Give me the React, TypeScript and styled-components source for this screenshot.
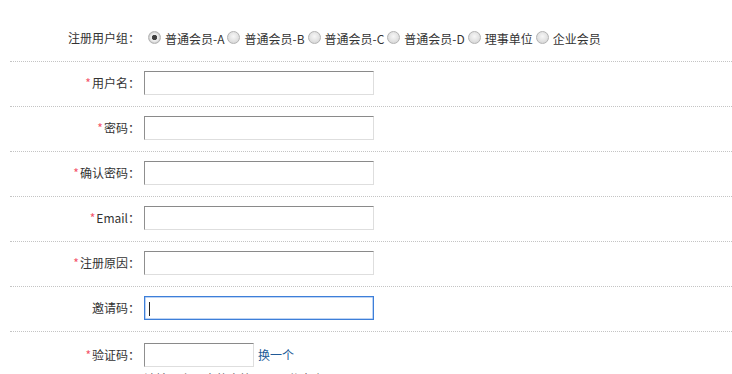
import React from "react";
import styled, { createGlobalStyle, css } from "styled-components";

const Global = createGlobalStyle`
  html, body { margin: 0; padding: 0; background: #fff; overflow: hidden; }
  body { font-family: "Microsoft YaHei", "Noto Sans CJK SC", "Noto Sans", sans-serif; font-size: 12px; color: #333; }
`;

const Form = styled.form`
  margin: 0 0 0 10px;
  padding-top: 17px;
`;

const Row = styled.div<{ $top?: number }>`
  display: flex;
  align-items: flex-start;
  padding: ${(p) => p.$top ?? 9}px 0 11px;
  min-height: 24px;
  border-bottom: 1px dotted #c4c4c4;
`;

const LastRow = styled(Row)`
  border-bottom: none;
`;

const Label = styled.label`
  flex: 0 0 130px;
  text-align: right;
  line-height: 24px;
  color: #333;
  white-space: nowrap;
`;

const Star = styled.span`
  color: #f4556b;
  margin-right: 1px;
`;

const Field = styled.div`
  display: flex;
  flex-direction: column;
  padding-left: 4px;
`;

const Inline = styled.div`
  display: flex;
  align-items: center;
  height: 24px;
`;

const Radio = styled.input.attrs({ type: "radio" })<{ $first?: boolean }>`
  appearance: none;
  -webkit-appearance: none;
  width: 13px;
  height: 13px;
  margin: 0 4px 0 ${(p) => (p.$first ? 4 : 3)}px;
  border-radius: 50%;
  border: 1px solid #b3b3b3;
  box-sizing: border-box;
  background: radial-gradient(circle at 50% 40%, #f7f7f7 0, #e2e2e2 55%, #cdcdcd 100%);
  position: relative;
  top: -1px;
  &:checked {
    background: radial-gradient(circle, #3c3c3c 0, #444 2.3px, #efefef 3px, #e6e6e6 4.3px, #c9c9c9 5.5px);
  }
`;

const Opt = styled.span`
  color: #333;
`;

const TextInput = styled.input<{ $w?: number; $active?: boolean }>`
  width: ${(p) => p.$w ?? 230}px;
  height: 24px;
  box-sizing: border-box;
  margin: 0;
  padding: 0 4px;
  font: inherit;
  background: #fff;
  outline: none;
  border: 1px solid;
  border-color: #8a8a8a #dedede #dedede #8f8f8f;
  ${(p) =>
    p.$active &&
    css`
      border-color: #3d7fd9;
      box-shadow: inset 0 0 0 0.5px #7eaaea;
    `}
`;

const InputWrap = styled.div`
  position: relative;
  display: inline-flex;
`;

const Caret = styled.span`
  position: absolute;
  left: 5px;
  top: 6px;
  width: 1px;
  height: 14px;
  background: #222;
`;

const Link = styled.a`
  color: #215a97;
  text-decoration: none;
  margin-left: 4px;
  line-height: 24px;
`;

const Hint = styled.div`
  color: #666;
  line-height: 18px;
  margin-top: 3px;
`;

const groups = ["普通会员-A", "普通会员-B", "普通会员-C", "普通会员-D", "理事单位", "企业会员"];

const fields: { label: string; req: boolean }[] = [
  { label: "用户名", req: true },
  { label: "密码", req: true },
  { label: "确认密码", req: true },
  { label: "Email", req: true },
  { label: "注册原因", req: true },
];

export default function App() {
  return (
    <>
      <Global />
      <Form onSubmit={(e) => e.preventDefault()}>
        <Row>
          <Label>注册用户组：</Label>
          <Field>
            <Inline>
              {groups.map((g, i) => (
                <React.Fragment key={g}>
                  <Radio name="group" defaultChecked={i === 0} $first={i === 0} />
                  <Opt>{g}</Opt>
                </React.Fragment>
              ))}
            </Inline>
          </Field>
        </Row>
        {fields.map((f) => (
          <Row key={f.label}>
            <Label>
              {f.req && <Star>*</Star>}
              {f.label}：
            </Label>
            <Field>
              <TextInput type={f.label.includes("密码") ? "password" : "text"} />
            </Field>
          </Row>
        ))}
        <Row>
          <Label>邀请码：</Label>
          <Field>
            <InputWrap>
              <TextInput $active />
              <Caret />
            </InputWrap>
          </Field>
        </Row>
        <LastRow $top={11}>
          <Label>
            <Star>*</Star>验证码：
          </Label>
          <Field>
            <Inline>
              <TextInput $w={110} />
              <Link href="#">换一个</Link>
            </Inline>
            <Hint>请输入上图中的字符，不区分大小写</Hint>
          </Field>
        </LastRow>
      </Form>
    </>
  );
}
